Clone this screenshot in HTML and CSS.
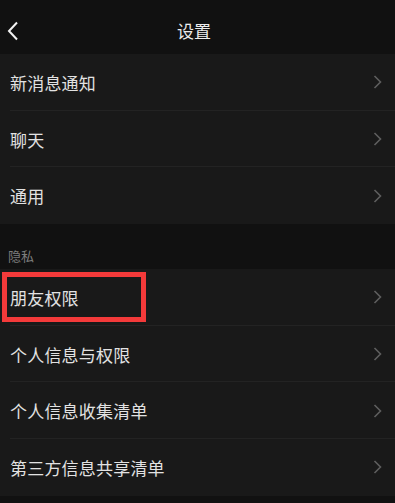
FILE: index.html
```html
<!DOCTYPE html>
<html lang="zh">
<head>
<meta charset="utf-8">
<link rel="stylesheet" href="styles.css">
</head>
<body>
<div class="page">
  <header class="topbar">
    <svg class="back" width="12" height="20" viewBox="0 0 12 20"><path d="M10 1.5 L2 10 L10 18.5" fill="none" stroke="#f2f2f2" stroke-width="2"/></svg>
    <div class="title">设置</div>
  </header>
  <div class="group">
    <div class="row"><span class="label">新消息通知</span><svg class="chev" width="9" height="14" viewBox="0 0 9 14"><path d="M1.5 1 L7.5 7 L1.5 13" fill="none" stroke="#5e5e5e" stroke-width="1.6"/></svg></div>
    <div class="row"><span class="label">聊天</span><svg class="chev" width="9" height="14" viewBox="0 0 9 14"><path d="M1.5 1 L7.5 7 L1.5 13" fill="none" stroke="#5e5e5e" stroke-width="1.6"/></svg></div>
    <div class="row last"><span class="label">通用</span><svg class="chev" width="9" height="14" viewBox="0 0 9 14"><path d="M1.5 1 L7.5 7 L1.5 13" fill="none" stroke="#5e5e5e" stroke-width="1.6"/></svg></div>
  </div>
  <div class="section">隐私</div>
  <div class="group">
    <div class="row"><span class="label">朋友权限</span><span class="highlight"></span><svg class="chev" width="9" height="14" viewBox="0 0 9 14"><path d="M1.5 1 L7.5 7 L1.5 13" fill="none" stroke="#5e5e5e" stroke-width="1.6"/></svg></div>
    <div class="row"><span class="label">个人信息与权限</span><svg class="chev" width="9" height="14" viewBox="0 0 9 14"><path d="M1.5 1 L7.5 7 L1.5 13" fill="none" stroke="#5e5e5e" stroke-width="1.6"/></svg></div>
    <div class="row"><span class="label">个人信息收集清单</span><svg class="chev" width="9" height="14" viewBox="0 0 9 14"><path d="M1.5 1 L7.5 7 L1.5 13" fill="none" stroke="#5e5e5e" stroke-width="1.6"/></svg></div>
    <div class="row last"><span class="label">第三方信息共享清单</span><svg class="chev" width="9" height="14" viewBox="0 0 9 14"><path d="M1.5 1 L7.5 7 L1.5 13" fill="none" stroke="#5e5e5e" stroke-width="1.6"/></svg></div>
  </div>
</div>
</body>
</html>
```
FILE: styles.css
```css
html, body {
  margin: 0;
  padding: 0;
  background: #111111;
}
body {
  font-family: "Noto Sans CJK SC", "Noto Sans", sans-serif;
  width: 395px;
  height: 503px;
  overflow: hidden;
}
.page {
  display: flex;
  flex-direction: column;
}
.topbar {
  height: 54px;
  background: #111111;
  position: relative;
  display: flex;
  align-items: center;
  justify-content: center;
  padding-right: 7px;
}
.back {
  position: absolute;
  left: 7px;
  top: 21px;
}
.title {
  color: #ececec;
  font-size: 17px;
  margin-top: 7px;
}
.group {
  background: #191919;
  display: flex;
  flex-direction: column;
}
.row {
  height: 56.7px;
  box-sizing: border-box;
  display: flex;
  align-items: center;
  justify-content: space-between;
  padding: 0 13px 0 10px;
  position: relative;
}
.row::after {
  content: "";
  position: absolute;
  left: 10px;
  right: 0;
  bottom: 0;
  height: 1px;
  background: #232323;
}
.row.last::after {
  display: none;
}
.label {
  color: #e2e2e2;
  font-size: 17px;
  letter-spacing: 0.2px;
}
.chev {
  display: block;
}
.section {
  height: 45px;
  box-sizing: border-box;
  padding: 22px 0 0 8px;
  color: #7c7c7c;
  font-size: 13px;
  background: #111111;
}
.highlight {
  position: absolute;
  left: 2px;
  top: 3px;
  width: 144px;
  height: 50px;
  box-sizing: border-box;
  border: 5px solid #f43a3a;
}
```
